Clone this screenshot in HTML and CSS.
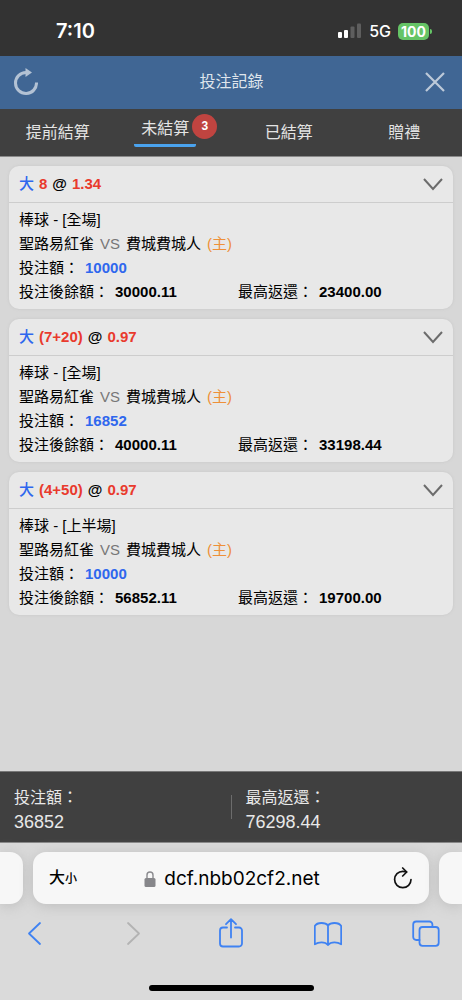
FILE: index.html
```html
<!DOCTYPE html>
<html lang="zh-Hant">
<head>
<meta charset="utf-8">
<meta name="viewport" content="width=device-width, initial-scale=1">
<title>投注記錄</title>
<link rel="stylesheet" href="styles.css">
</head>
<body>
<div class="status">
  <span class="time">7:10</span>
  <div class="signals">
    <svg width="24" height="16" viewBox="0 0 24 16" aria-hidden="true"><g fill="#fff"><rect x="0" y="9" width="4" height="6" rx="1"/><rect x="6" y="7" width="4" height="8" rx="1"/></g><g fill="#5e5e5e"><rect x="12.500" y="3.500" width="4" height="11.500" rx="1"/><rect x="19" y="0.500" width="4" height="14.500" rx="1"/></g></svg>
    <span class="network">5G</span>
    <span class="battery"><span class="charge">100</span><span class="nub"></span></span>
  </div>
</div>
<header class="header">
  <button class="icon-btn" type="button" aria-label="重新整理">
    <svg width="24" height="28" viewBox="0 0 24 28" fill="none"><path d="M22.500 14.500A10.500 10.500 0 1 1 12 4.500" stroke="#b3c2d4" stroke-width="3"/><path d="M11.500 0l6.500 4.500L11.500 9z" fill="#b3c2d4"/></svg>
  </button>
  <h1 class="title">投注記錄</h1>
  <button class="icon-btn" type="button" aria-label="關閉">
    <svg width="20" height="20" viewBox="0 0 20 20" fill="none" stroke="#bdcad9" stroke-width="2.200"><path d="M1 1l18 18M19 1L1 19"/></svg>
  </button>
</header>
<nav class="tabs">
  <button class="tab" type="button">提前結算</button>
  <button class="tab active" type="button"><span class="tab-name">未結算</span><span class="count">3</span></button>
  <button class="tab" type="button">已結算</button>
  <button class="tab" type="button">贈禮</button>
</nav>
<main class="bets">
  <article class="bet">
    <div class="bet-head">
      <span class="pick">大</span><span class="odds">8</span><span>@</span><span class="odds">1.34</span>
      <button class="toggle" type="button" aria-label="展開"><svg width="20" height="13" viewBox="0 0 20 13" fill="none" stroke="#6c6c6c" stroke-width="2"><path d="M1 1l9 10 9-10"/></svg></button>
    </div>
    <div class="bet-body">
      <div class="row">棒球 - [全場]</div>
      <div class="row"><span>聖路易紅雀</span><span class="vs">VS</span><span>費城費城人</span><span class="home">(主)</span></div>
      <div class="row"><span>投注額：</span><b class="stake">10000</b></div>
      <div class="pair"><div class="row"><span>投注後餘額：</span><b>30000.11</b></div><div class="row"><span>最高返還：</span><b>23400.00</b></div></div>
    </div>
  </article>
  <article class="bet">
    <div class="bet-head">
      <span class="pick">大</span><span class="odds">(7+20)</span><span>@</span><span class="odds">0.97</span>
      <button class="toggle" type="button" aria-label="展開"><svg width="20" height="13" viewBox="0 0 20 13" fill="none" stroke="#6c6c6c" stroke-width="2"><path d="M1 1l9 10 9-10"/></svg></button>
    </div>
    <div class="bet-body">
      <div class="row">棒球 - [全場]</div>
      <div class="row"><span>聖路易紅雀</span><span class="vs">VS</span><span>費城費城人</span><span class="home">(主)</span></div>
      <div class="row"><span>投注額：</span><b class="stake">16852</b></div>
      <div class="pair"><div class="row"><span>投注後餘額：</span><b>40000.11</b></div><div class="row"><span>最高返還：</span><b>33198.44</b></div></div>
    </div>
  </article>
  <article class="bet">
    <div class="bet-head">
      <span class="pick">大</span><span class="odds">(4+50)</span><span>@</span><span class="odds">0.97</span>
      <button class="toggle" type="button" aria-label="展開"><svg width="20" height="13" viewBox="0 0 20 13" fill="none" stroke="#6c6c6c" stroke-width="2"><path d="M1 1l9 10 9-10"/></svg></button>
    </div>
    <div class="bet-body">
      <div class="row">棒球 - [上半場]</div>
      <div class="row"><span>聖路易紅雀</span><span class="vs">VS</span><span>費城費城人</span><span class="home">(主)</span></div>
      <div class="row"><span>投注額：</span><b class="stake">10000</b></div>
      <div class="pair"><div class="row"><span>投注後餘額：</span><b>56852.11</b></div><div class="row"><span>最高返還：</span><b>19700.00</b></div></div>
    </div>
  </article>
</main>
<section class="totals">
  <div class="total"><span>投注額：</span><span class="amount">36852</span></div>
  <span class="divider"></span>
  <div class="total"><span>最高返還：</span><span class="amount">76298.44</span></div>
</section>
<footer class="browser">
  <div class="address-row">
    <span class="peek peek-left"></span>
    <div class="address">
      <button class="text-size" type="button">大<small>小</small></button>
      <button class="url" type="button">
        <svg width="12" height="16" viewBox="0 0 12 16" aria-hidden="true"><path d="M3 8V4a3 3 0 0 1 6 0v4" fill="none" stroke="#8a8a8e" stroke-width="1.400"/><rect x="0.500" y="7" width="11" height="9" rx="1.500" fill="#86868a"/></svg>
        <span>dcf.nbb02cf2.net</span>
      </button>
      <button class="icon-btn" type="button" aria-label="重新載入">
        <svg width="20" height="22" viewBox="0 0 20 22" fill="none" stroke="#111" stroke-width="1.700" stroke-linecap="round" stroke-linejoin="round"><path d="M18 12.500a8.200 8.200 0 1 1-8.200-8.200c1.500 0 2.500.200 3.700.700"/><path d="M9.700 1l4 4-4 4"/></svg>
      </button>
    </div>
    <span class="peek peek-right"></span>
  </div>
  <nav class="toolbar">
    <button class="icon-btn" type="button" aria-label="上一頁"><svg width="28" height="30" viewBox="0 0 28 30"><path d="M19 5L8 15.500l11 10.500"/></svg></button>
    <button class="icon-btn disabled" type="button" aria-label="下一頁" disabled><svg width="28" height="30" viewBox="0 0 28 30"><path d="M9 5L20 15.500 9 26"/></svg></button>
    <button class="icon-btn" type="button" aria-label="分享"><svg width="28" height="30" viewBox="0 0 28 30"><path d="M10 9.500H6a3 3 0 0 0-3 3v13a3 3 0 0 0 3 3h16a3 3 0 0 0 3-3v-13a3 3 0 0 0-3-3h-4M14 19.500V1.500M9 6.200l5-5 5 5"/></svg></button>
    <button class="icon-btn" type="button" aria-label="書籤"><svg width="28" height="30" viewBox="0 0 28 30"><path d="M14 7.500C12.500 5.500 10 5 7.500 5S2 6 .8 8v18.300C3 24.800 5 24.300 7.500 24.300s5 .700 6.500 2.700c1.500-2 4-2.700 6.500-2.700s4.500.500 6.700 2V8C26 6 23 5 20.500 5S15.500 5.500 14 7.500zV27"/></svg></button>
    <button class="icon-btn" type="button" aria-label="分頁"><svg width="28" height="30" viewBox="0 0 28 30"><rect x="7.500" y="9" width="19.200" height="18.800" rx="3"/><path d="M7.500 22H4.200a3 3 0 0 1-3-3V6.500a3 3 0 0 1 3-3h13.200a3 3 0 0 1 3 3V9"/></svg></button>
  </nav>
  <span class="home-bar"></span>
</footer>
</body>
</html>
```
FILE: styles.css
```css
* { box-sizing: border-box; }
body {
  margin: 0;
  min-height: 100vh;
  display: flex;
  flex-direction: column;
  background: #d7d7d7;
  color: #000;
  font: 15px/24px "Liberation Sans", "Noto Sans CJK TC", sans-serif;
}
button {
  margin: 0;
  padding: 0;
  border: 0;
  background: none;
  color: inherit;
  font: inherit;
}
svg { display: block; }

.status {
  display: flex;
  align-items: center;
  justify-content: space-between;
  padding: 19px 33px 13px 56px;
  background: #333;
  color: #fff;
  font-family: Inter, sans-serif;
}
.time { font-size: 20px; font-weight: 600; }
.signals { display: flex; align-items: center; gap: 7px; }
.network { font-size: 16px; font-weight: 500; }
.battery { display: flex; align-items: center; gap: 1px; }
.charge {
  padding: 0 3px;
  border-radius: 5px;
  background: #65c466;
  font-size: 14px;
  line-height: 17px;
  font-weight: 700;
}
.nub { width: 2px; height: 5px; margin-right: -3px; border-radius: 0 2px 2px 0; background: #65c466; }

.header {
  display: flex;
  align-items: center;
  justify-content: space-between;
  min-height: 53px;
  padding: 0 17px 2px 14px;
  background: #406694;
  color: #dfe5ec;
}
.title { margin: 0; font-size: 16px; font-weight: 400; }

.tabs {
  display: grid;
  grid-template-columns: repeat(4, 1fr);
  min-height: 48px;
  border-bottom: 1px solid #8a8a8a;
  background: #404040;
  color: #e4e4e4;
  font-size: 16px;
}
.active { display: flex; align-items: center; justify-content: center; padding-bottom: 4px; }
.tab-name { padding: 0 7px; border-bottom: 3px solid #4aa3ee; border-radius: 2px; line-height: 30px; }
.count {
  width: 25px;
  margin: 0 -5px 8px -4px;
  border-radius: 50%;
  background: #c04440;
  color: #fff;
  font-size: 12px;
  font-weight: 700;
  line-height: 25px;
}

.bets { flex: 1; display: flex; flex-direction: column; gap: 10px; padding: 9px 9px 24px; }
.bet { border-radius: 10px; background: #e8e8e8; box-shadow: 0 0 3px #c6c6c6; }
.bet-head {
  display: flex;
  align-items: center;
  gap: 5px;
  min-height: 37px;
  padding: 0 10px;
  border-bottom: 1px solid #cdcdcd;
  font-weight: 700;
}
.pick { color: #2f67ee; font-weight: 500; }
.odds { color: #e93a2d; }
.toggle { margin-left: auto; }
.bet-body { padding: 5px 0 5px 10px; }
.row { display: flex; gap: 6px; white-space: nowrap; }
.pair { display: grid; grid-template-columns: 1fr 1fr; gap: 4px; }
.vs { color: #777; }
.home { color: #ee9038; }
.stake { color: #2f67ee; }

.totals {
  display: flex;
  align-items: center;
  min-height: 72px;
  border-top: 1px solid #777;
  border-bottom: 1px solid #888;
  background: #404040;
  color: #e8e8e8;
}
.total { flex: 1; display: flex; flex-direction: column; padding: 6px 0 0 14px; font-size: 16px; }
.amount { font-size: 18px; }
.divider { width: 1px; height: 24px; background: #6c6c6c; }

.browser { display: flex; flex-direction: column; background: #dadada; }
.address-row { display: flex; gap: 10px; padding-top: 9px; }
.peek, .address { min-height: 52px; background: #f7f7f7; box-shadow: 0 2px 14px #bdbdbd; }
.peek { width: 23px; }
.peek-left { border-radius: 0 13px 13px 0; }
.peek-right { border-radius: 13px 0 0 13px; }
.address {
  flex: 1;
  display: flex;
  align-items: center;
  justify-content: space-between;
  padding: 0 16px;
  border-radius: 13px;
  color: #000;
}
.text-size { font-size: 16px; font-weight: 500; }
.text-size small { font-size: 12px; }
.url { display: flex; align-items: center; gap: 8px; padding: 2px 6px 0 0; font-family: Inter, sans-serif; font-size: 19px; }
.toolbar { display: flex; justify-content: space-between; padding: 14px 22px 0 21px; }
.toolbar svg { fill: none; stroke: #3f82f2; stroke-width: 1.8px; stroke-linejoin: round; stroke-linecap: round; }
.toolbar .disabled svg { stroke: #b3b3b3; }
.home-bar { align-self: center; width: 165px; height: 6px; margin: 37px 0 9px; border-radius: 3px; background: #000; }
```
